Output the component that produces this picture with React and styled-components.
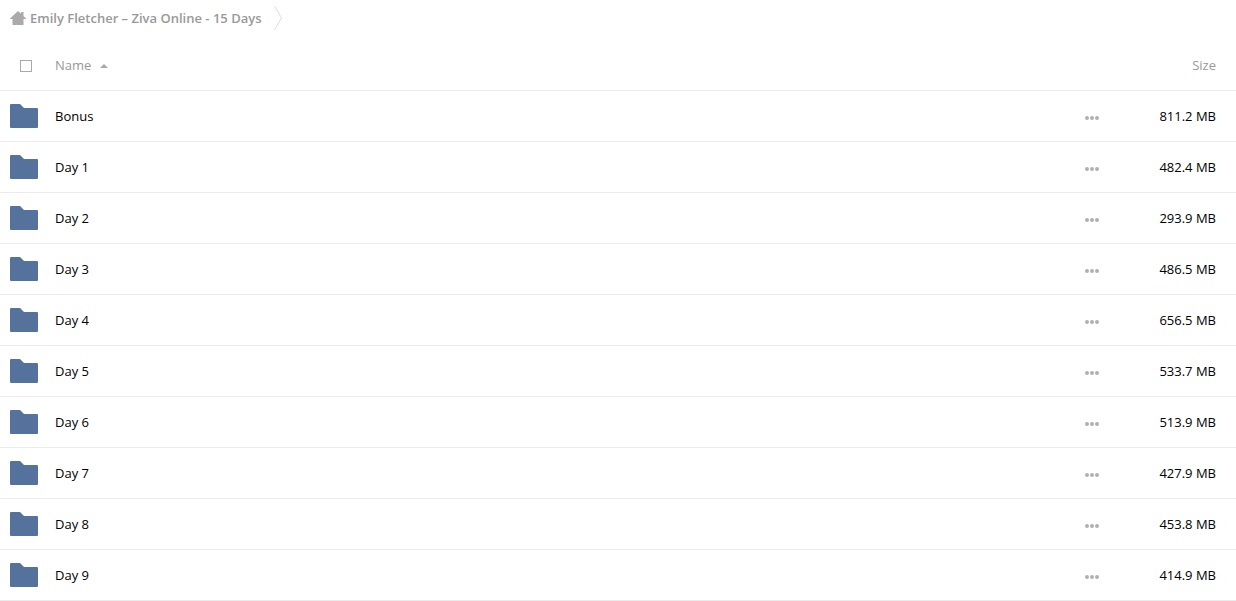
import React from "react";
import styled, { createGlobalStyle } from "styled-components";

const GlobalStyle = createGlobalStyle`
  body {
    margin: 0;
    background: #fff;
    color: #000;
    font-family: "Open Sans", "Noto Sans", sans-serif;
    font-size: 13px;
    line-height: 20px;
  }
`;

const Breadcrumbs = styled.nav`
  display: flex;
  align-items: center;
  height: 36px;
  padding: 0 10px;
  margin-bottom: 4px;
`;

const Crumb = styled.a`
  display: flex;
  align-items: center;
  gap: 4px;
  margin-right: 12px;
  color: #999;
  font-weight: 600;
  text-decoration: none;
  white-space: nowrap;
`;

const Files = styled.table`
  width: 100%;
  table-layout: fixed;
  border-collapse: separate;
  border-spacing: 0;
`;

const Cell = styled.td`
  box-sizing: border-box;
  height: 51px;
  padding: 0;
  border-bottom: 1px solid #ebebeb;
  vertical-align: middle;
`;

const IconCell = styled(Cell)`
  width: 55px;
  padding-left: 10px;
`;

const CheckCell = styled(IconCell)`
  padding-top: 2px;
  padding-left: 20px;
  text-align: left;
`;

const MenuCell = styled(Cell)`
  width: 40px;
`;

const SizeCell = styled(Cell)`
  width: 124px;
  padding-right: 20px;
  text-align: right;
  font-weight: 400;
  color: ${(p) => (p.$muted ? "#999" : "#000")};
`;

const NameCell = styled(Cell)`
  text-align: left;
  font-weight: 400;
`;

const Checkbox = styled.input`
  appearance: none;
  display: block;
  box-sizing: border-box;
  width: 12px;
  height: 12px;
  margin: 0;
  border: 1px solid #aaa;
  background: #fff;
  &:checked {
    background: #aaa;
  }
`;

const SortButton = styled.button`
  display: flex;
  align-items: center;
  gap: 9px;
  padding: 0;
  border: 0;
  background: none;
  color: #999;
  font: inherit;
  cursor: pointer;
`;

const NameLink = styled.a`
  color: inherit;
  text-decoration: none;
`;

const MenuButton = styled.button`
  display: flex;
  align-items: center;
  justify-content: center;
  width: 40px;
  height: 24px;
  padding: 4px 0 0;
  border: 0;
  background: none;
  cursor: pointer;
`;

const Icon = styled.svg`
  display: block;
  flex: none;
`;

const folders = [
  ["Bonus", "811.2 MB"],
  ["Day 1", "482.4 MB"],
  ["Day 2", "293.9 MB"],
  ["Day 3", "486.5 MB"],
  ["Day 4", "656.5 MB"],
  ["Day 5", "533.7 MB"],
  ["Day 6", "513.9 MB"],
  ["Day 7", "427.9 MB"],
  ["Day 8", "453.8 MB"],
  ["Day 9", "414.9 MB"],
];

const HomeIcon = () => (
  <Icon width="16" height="14" viewBox="0 0 16 14" fill="#aaa" aria-hidden="true">
    <path d="M8 0L0 7.4V8H2.5V14H13.5V8H16V7.4L13.5 5.1V1H11V2.8Z" />
  </Icon>
);

const CrumbArrow = () => (
  <Icon width="8" height="24" viewBox="0 0 8 24" fill="none" stroke="#ddd" aria-hidden="true">
    <path d="M0.5 0L7.5 12L0.5 24" />
  </Icon>
);

const SortArrow = () => (
  <Icon width="8" height="6" viewBox="0 0 8 6" fill="#aaa" aria-hidden="true">
    <path d="M0 6L4 2L8 6Z" />
  </Icon>
);

const FolderIcon = () => (
  <Icon width="28" height="24" viewBox="0 0 28 24" fill="#54729b" aria-hidden="true">
    <path d="M1 0H10L14 4H27Q28 4 28 5V23Q28 24 27 24H1Q0 24 0 23V1Q0 0 1 0Z" />
  </Icon>
);

const DotsIcon = () => (
  <Icon width="14" height="4" viewBox="0 0 14 4" fill="#b0b0b0" aria-hidden="true">
    <circle cx="2" cy="2" r="2" />
    <circle cx="7" cy="2" r="2" />
    <circle cx="12" cy="2" r="2" />
  </Icon>
);

export default function App() {
  return (
    <>
      <GlobalStyle />
      <Breadcrumbs aria-label="Breadcrumb">
        <Crumb href="#">
          <HomeIcon />
          Emily Fletcher – Ziva Online - 15 Days
        </Crumb>
        <CrumbArrow />
      </Breadcrumbs>
      <Files>
        <thead>
          <tr>
            <CheckCell as="th">
              <Checkbox type="checkbox" aria-label="Select all" />
            </CheckCell>
            <NameCell as="th" scope="col" aria-sort="ascending">
              <SortButton type="button">
                Name
                <SortArrow />
              </SortButton>
            </NameCell>
            <MenuCell />
            <SizeCell as="th" scope="col" $muted>
              Size
            </SizeCell>
          </tr>
        </thead>
        <tbody>
          {folders.map(([name, size]) => (
            <tr key={name}>
              <IconCell>
                <FolderIcon />
              </IconCell>
              <NameCell>
                <NameLink href="#">{name}</NameLink>
              </NameCell>
              <MenuCell>
                <MenuButton type="button" aria-label={`Actions for ${name}`}>
                  <DotsIcon />
                </MenuButton>
              </MenuCell>
              <SizeCell>{size}</SizeCell>
            </tr>
          ))}
        </tbody>
      </Files>
    </>
  );
}
